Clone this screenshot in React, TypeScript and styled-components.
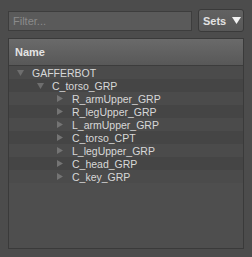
import React from "react";
import styled, { createGlobalStyle } from "styled-components";

const Global = createGlobalStyle`
  html, body {
    margin: 0;
    padding: 0;
    background: #4c4c4c;
  }
  body {
    font-family: "Liberation Sans", Arial, sans-serif;
  }
`;

const Page = styled.div`
  width: 252px;
  height: 257px;
  box-sizing: border-box;
  padding: 9px 8px 8px 8px;
  display: flex;
  flex-direction: column;
  gap: 6px;
`;

const TopBar = styled.div`
  display: flex;
  align-items: center;
  gap: 6px;
  height: 23px;
`;

const FilterField = styled.input`
  flex: 1;
  height: 20px;
  box-sizing: border-box;
  margin: 0;
  padding: 0 4px;
  background: #5a5a5a;
  border: 1px solid #3d3d3d;
  border-radius: 0;
  color: #dcdcdc;
  font-family: "Liberation Sans", Arial, sans-serif;
  font-size: 11px;
  outline: none;
  &::placeholder {
    color: #8b8b8b;
  }
`;

const SetsButton = styled.button`
  width: 46px;
  height: 23px;
  box-sizing: border-box;
  margin: 0;
  padding: 0 0 0 4px;
  display: flex;
  align-items: center;
  gap: 6px;
  background: linear-gradient(#626262, #575757);
  border: 1px solid #3a3a3a;
  border-radius: 3px;
  color: #e2e2e2;
  font-family: "Liberation Sans", Arial, sans-serif;
  font-size: 11px;
  font-weight: bold;
`;

const Panel = styled.div`
  flex: 1;
  display: flex;
  flex-direction: column;
  background: #4e4e4e;
  border: 1px solid #3a3a3a;
`;

const Header = styled.div`
  height: 26px;
  display: flex;
  align-items: center;
  padding-left: 6px;
  background: linear-gradient(#6a6a6a, #585858);
  border-bottom: 1px solid #3c3c3c;
  color: #e4e4e4;
  font-size: 11px;
  font-weight: bold;
`;

const Row = styled.div<{ $depth: number; $alt: boolean }>`
  height: 13px;
  display: flex;
  align-items: center;
  padding-left: ${(p) => 8 + p.$depth * 20}px;
  background: ${(p) => (p.$alt ? "#454545" : "#4b4b4b")};
  color: #d8d8d8;
  font-size: 10.5px;
  white-space: nowrap;
`;

const Arrow = styled.span`
  width: 15px;
  display: flex;
  align-items: center;
  justify-content: flex-start;
`;

const Down = () => (
  <svg width="7" height="6" viewBox="0 0 7 6">
    <polygon points="0,0 7,0 3.5,6" fill="#6e6e6e" />
  </svg>
);

const Right = () => (
  <svg width="6" height="7" viewBox="0 0 6 7">
    <polygon points="0,0 6,3.5 0,7" fill="#747474" />
  </svg>
);

const items: { name: string; depth: number; open: boolean }[] = [
  { name: "GAFFERBOT", depth: 0, open: true },
  { name: "C_torso_GRP", depth: 1, open: true },
  { name: "R_armUpper_GRP", depth: 2, open: false },
  { name: "R_legUpper_GRP", depth: 2, open: false },
  { name: "L_armUpper_GRP", depth: 2, open: false },
  { name: "C_torso_CPT", depth: 2, open: false },
  { name: "L_legUpper_GRP", depth: 2, open: false },
  { name: "C_head_GRP", depth: 2, open: false },
  { name: "C_key_GRP", depth: 2, open: false },
];

const App = () => {
  return (
    <Page>
      <Global />
      <TopBar>
        <FilterField placeholder="Filter..." />
        <SetsButton>
          Sets
          <svg width="9" height="7" viewBox="0 0 9 7">
            <polygon points="0,0 9,0 4.5,7" fill="#f2f2f2" />
          </svg>
        </SetsButton>
      </TopBar>
      <Panel>
        <Header>Name</Header>
        {items.map((it, i) => (
          <Row key={it.name} $depth={it.depth} $alt={i % 2 === 1}>
            <Arrow>{it.open ? <Down /> : <Right />}</Arrow>
            {it.name}
          </Row>
        ))}
      </Panel>
    </Page>
  );
};

export default App;
